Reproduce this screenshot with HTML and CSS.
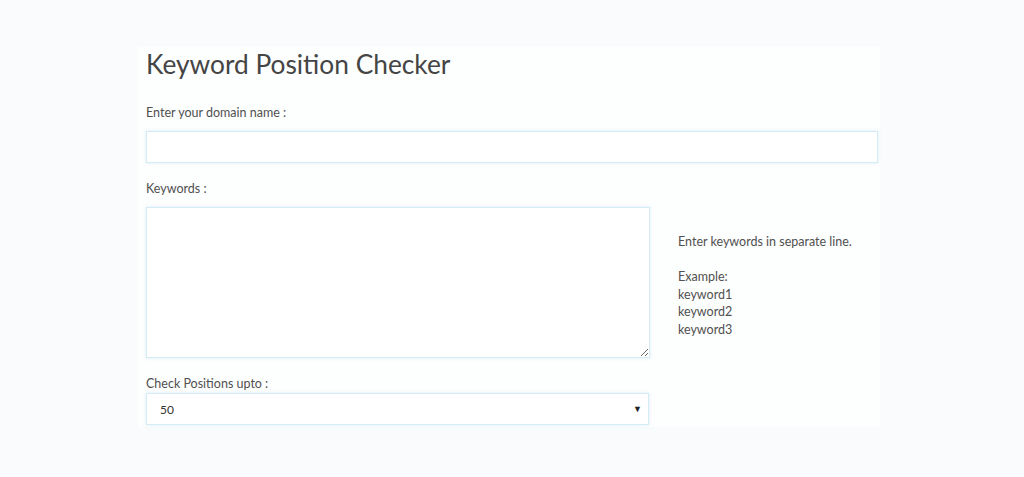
FILE: index.html
```html
<!DOCTYPE html>
<html lang="en">
<head>
    <meta charset="UTF-8">
    <meta name="viewport" content="width=device-width, initial-scale=1.0">
    <title>Keyword Position Checker</title>
    <link rel="stylesheet" href="styles.css">
</head>
<body>

    <div class="panel">
        <h1>Keyword Position Checker</h1>

        <form id="positionForm">
            <label for="domain">Enter your domain name :</label>
            <input type="text" id="domain" class="field field-wide">

            <label for="keywords">Keywords :</label>
            <div class="keyword-row">
                <textarea id="keywords" class="field"></textarea>
                <div class="hint">
                    <p>Enter keywords in separate line.</p>
                    <p>Example:<br>keyword1<br>keyword2<br>keyword3</p>
                </div>
            </div>

            <label for="depth">Check Positions upto :</label>
            <div class="select-wrap">
                <select id="depth" class="field">
                    <option>10</option>
                    <option>20</option>
                    <option selected>50</option>
                    <option>100</option>
                </select>
                <span class="caret">&#9660;</span>
            </div>
        </form>
    </div>

</body>
</html>
```

FILE: styles.css
```css
/* Global styles */
html, body {
    margin: 0;
    padding: 0;
    height: 100%;
}

body {
    background-color: #f9fbfd;
    font-family: Lato, "Open Sans", sans-serif;
    color: #555;
    padding-top: 47px;
    box-sizing: border-box;
}

/* Main panel */
.panel {
    background-color: #fdfefe;
    margin-left: 138px;
    width: 742px;
    height: 380px;
    padding: 0 2px 0 8px;
    box-sizing: border-box;
}

h1 {
    margin: 0;
    font-size: 26.3px;
    font-weight: 400;
    color: #454545;
    line-height: 34px;
}

/* Form */
label {
    display: block;
    font-size: 12.5px;
    line-height: 16px;
    color: #505050;
}

label[for="domain"] {
    margin-top: 24px;
    margin-bottom: 10px;
}

label[for="keywords"] {
    margin-top: 18px;
    margin-bottom: 10px;
}

label[for="depth"] {
    margin-top: 18px;
    margin-bottom: 1px;
}

.field {
    display: block;
    border: 1px solid #d5ecf6;
    box-shadow: 0 0 3px rgba(170, 215, 235, 0.45);
    background-color: #fff;
    border-radius: 0;
    box-sizing: border-box;
    font-family: inherit;
    font-size: 12px;
    color: #333;
    outline: none;
}

.field-wide {
    width: 732px;
    height: 32px;
}

.keyword-row {
    display: flex;
    align-items: center;
}

textarea.field {
    width: 504px;
    height: 151px;
    resize: vertical;
}

.hint {
    margin-left: 28px;
    font-size: 12.5px;
    line-height: 17.6px;
    color: #505050;
    padding-top: 6px;
}

.hint p {
    margin: 0 0 17.6px;
}

.hint p:last-child {
    margin-bottom: 0;
}

/* Select box */
.select-wrap {
    position: relative;
    width: 503px;
}

select.field {
    width: 503px;
    height: 32px;
    padding: 0 13px;
    appearance: none;
    -webkit-appearance: none;
}

.caret {
    position: absolute;
    right: 7px;
    top: 10px;
    font-size: 9px;
    color: #222;
    pointer-events: none;
}
```
